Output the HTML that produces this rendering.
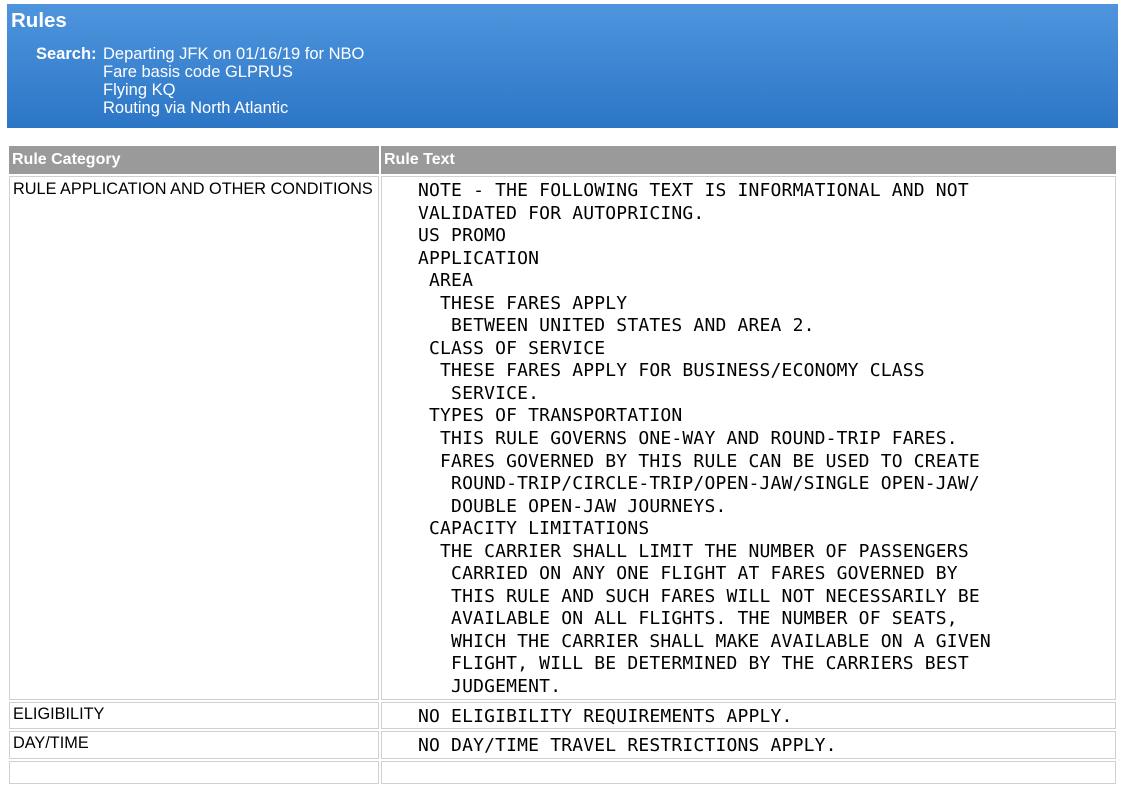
<!DOCTYPE html>
<html><head><meta charset="utf-8"><style>
body{margin:0;background:#fff;font-family:"Liberation Sans",Arial,sans-serif;}
.hdr{position:absolute;left:7px;top:4px;width:1111px;height:124px;background:linear-gradient(#4f95de,#2c76c6);color:#fff;}
.hdr h1{position:absolute;left:4px;top:5px;margin:0;font-size:20.5px;font-weight:bold;}
.lab{position:absolute;left:29px;top:41px;font-size:16.5px;font-weight:bold;}
.val{position:absolute;left:96px;top:41px;font-size:16.5px;line-height:18px;}
table{position:absolute;left:7px;top:144px;width:1111px;border-collapse:separate;border-spacing:2px;}
th{background:#9a9a9a;color:#fff;text-align:left;font-size:16px;height:28px;padding:0 3px;}
td{border:1px solid #d0d0d0;font-size:16.3px;vertical-align:top;padding:2px 3px 0;}
td.c1{width:362px;}
pre{margin:0;font-family:"DejaVu Sans Mono","Liberation Mono",monospace;font-size:18px;line-height:22.55px;padding-left:33px;letter-spacing:0.18px;}
</style></head><body>
<div class="hdr"><h1>Rules</h1><div class="lab">Search:</div><div class="val">Departing JFK on 01/16/19 for NBO<br>Fare basis code GLPRUS<br>Flying KQ<br>Routing via North Atlantic</div></div>
<table>
<tr><th style="width:362px">Rule Category</th><th>Rule Text</th></tr>
<tr><td class="c1" style="padding-top:3px">RULE APPLICATION AND OTHER CONDITIONS</td><td style="padding-top:3px"><pre>NOTE - THE FOLLOWING TEXT IS INFORMATIONAL AND NOT
VALIDATED FOR AUTOPRICING.
US PROMO
APPLICATION
 AREA
  THESE FARES APPLY
   BETWEEN UNITED STATES AND AREA 2.
 CLASS OF SERVICE
  THESE FARES APPLY FOR BUSINESS/ECONOMY CLASS
   SERVICE.
 TYPES OF TRANSPORTATION
  THIS RULE GOVERNS ONE-WAY AND ROUND-TRIP FARES.
  FARES GOVERNED BY THIS RULE CAN BE USED TO CREATE
   ROUND-TRIP/CIRCLE-TRIP/OPEN-JAW/SINGLE OPEN-JAW/
   DOUBLE OPEN-JAW JOURNEYS.
 CAPACITY LIMITATIONS
  THE CARRIER SHALL LIMIT THE NUMBER OF PASSENGERS
   CARRIED ON ANY ONE FLIGHT AT FARES GOVERNED BY
   THIS RULE AND SUCH FARES WILL NOT NECESSARILY BE
   AVAILABLE ON ALL FLIGHTS. THE NUMBER OF SEATS,
   WHICH THE CARRIER SHALL MAKE AVAILABLE ON A GIVEN
   FLIGHT, WILL BE DETERMINED BY THE CARRIERS BEST
   JUDGEMENT.</pre></td></tr>
<tr><td class="c1">ELIGIBILITY</td><td style="padding-top:3px"><pre>NO ELIGIBILITY REQUIREMENTS APPLY.</pre></td></tr>
<tr><td class="c1">DAY/TIME</td><td style="padding-top:3px"><pre>NO DAY/TIME TRAVEL RESTRICTIONS APPLY.</pre></td></tr>
<tr><td class="c1">&nbsp;</td><td>&nbsp;</td></tr>
</table>
</body></html>
